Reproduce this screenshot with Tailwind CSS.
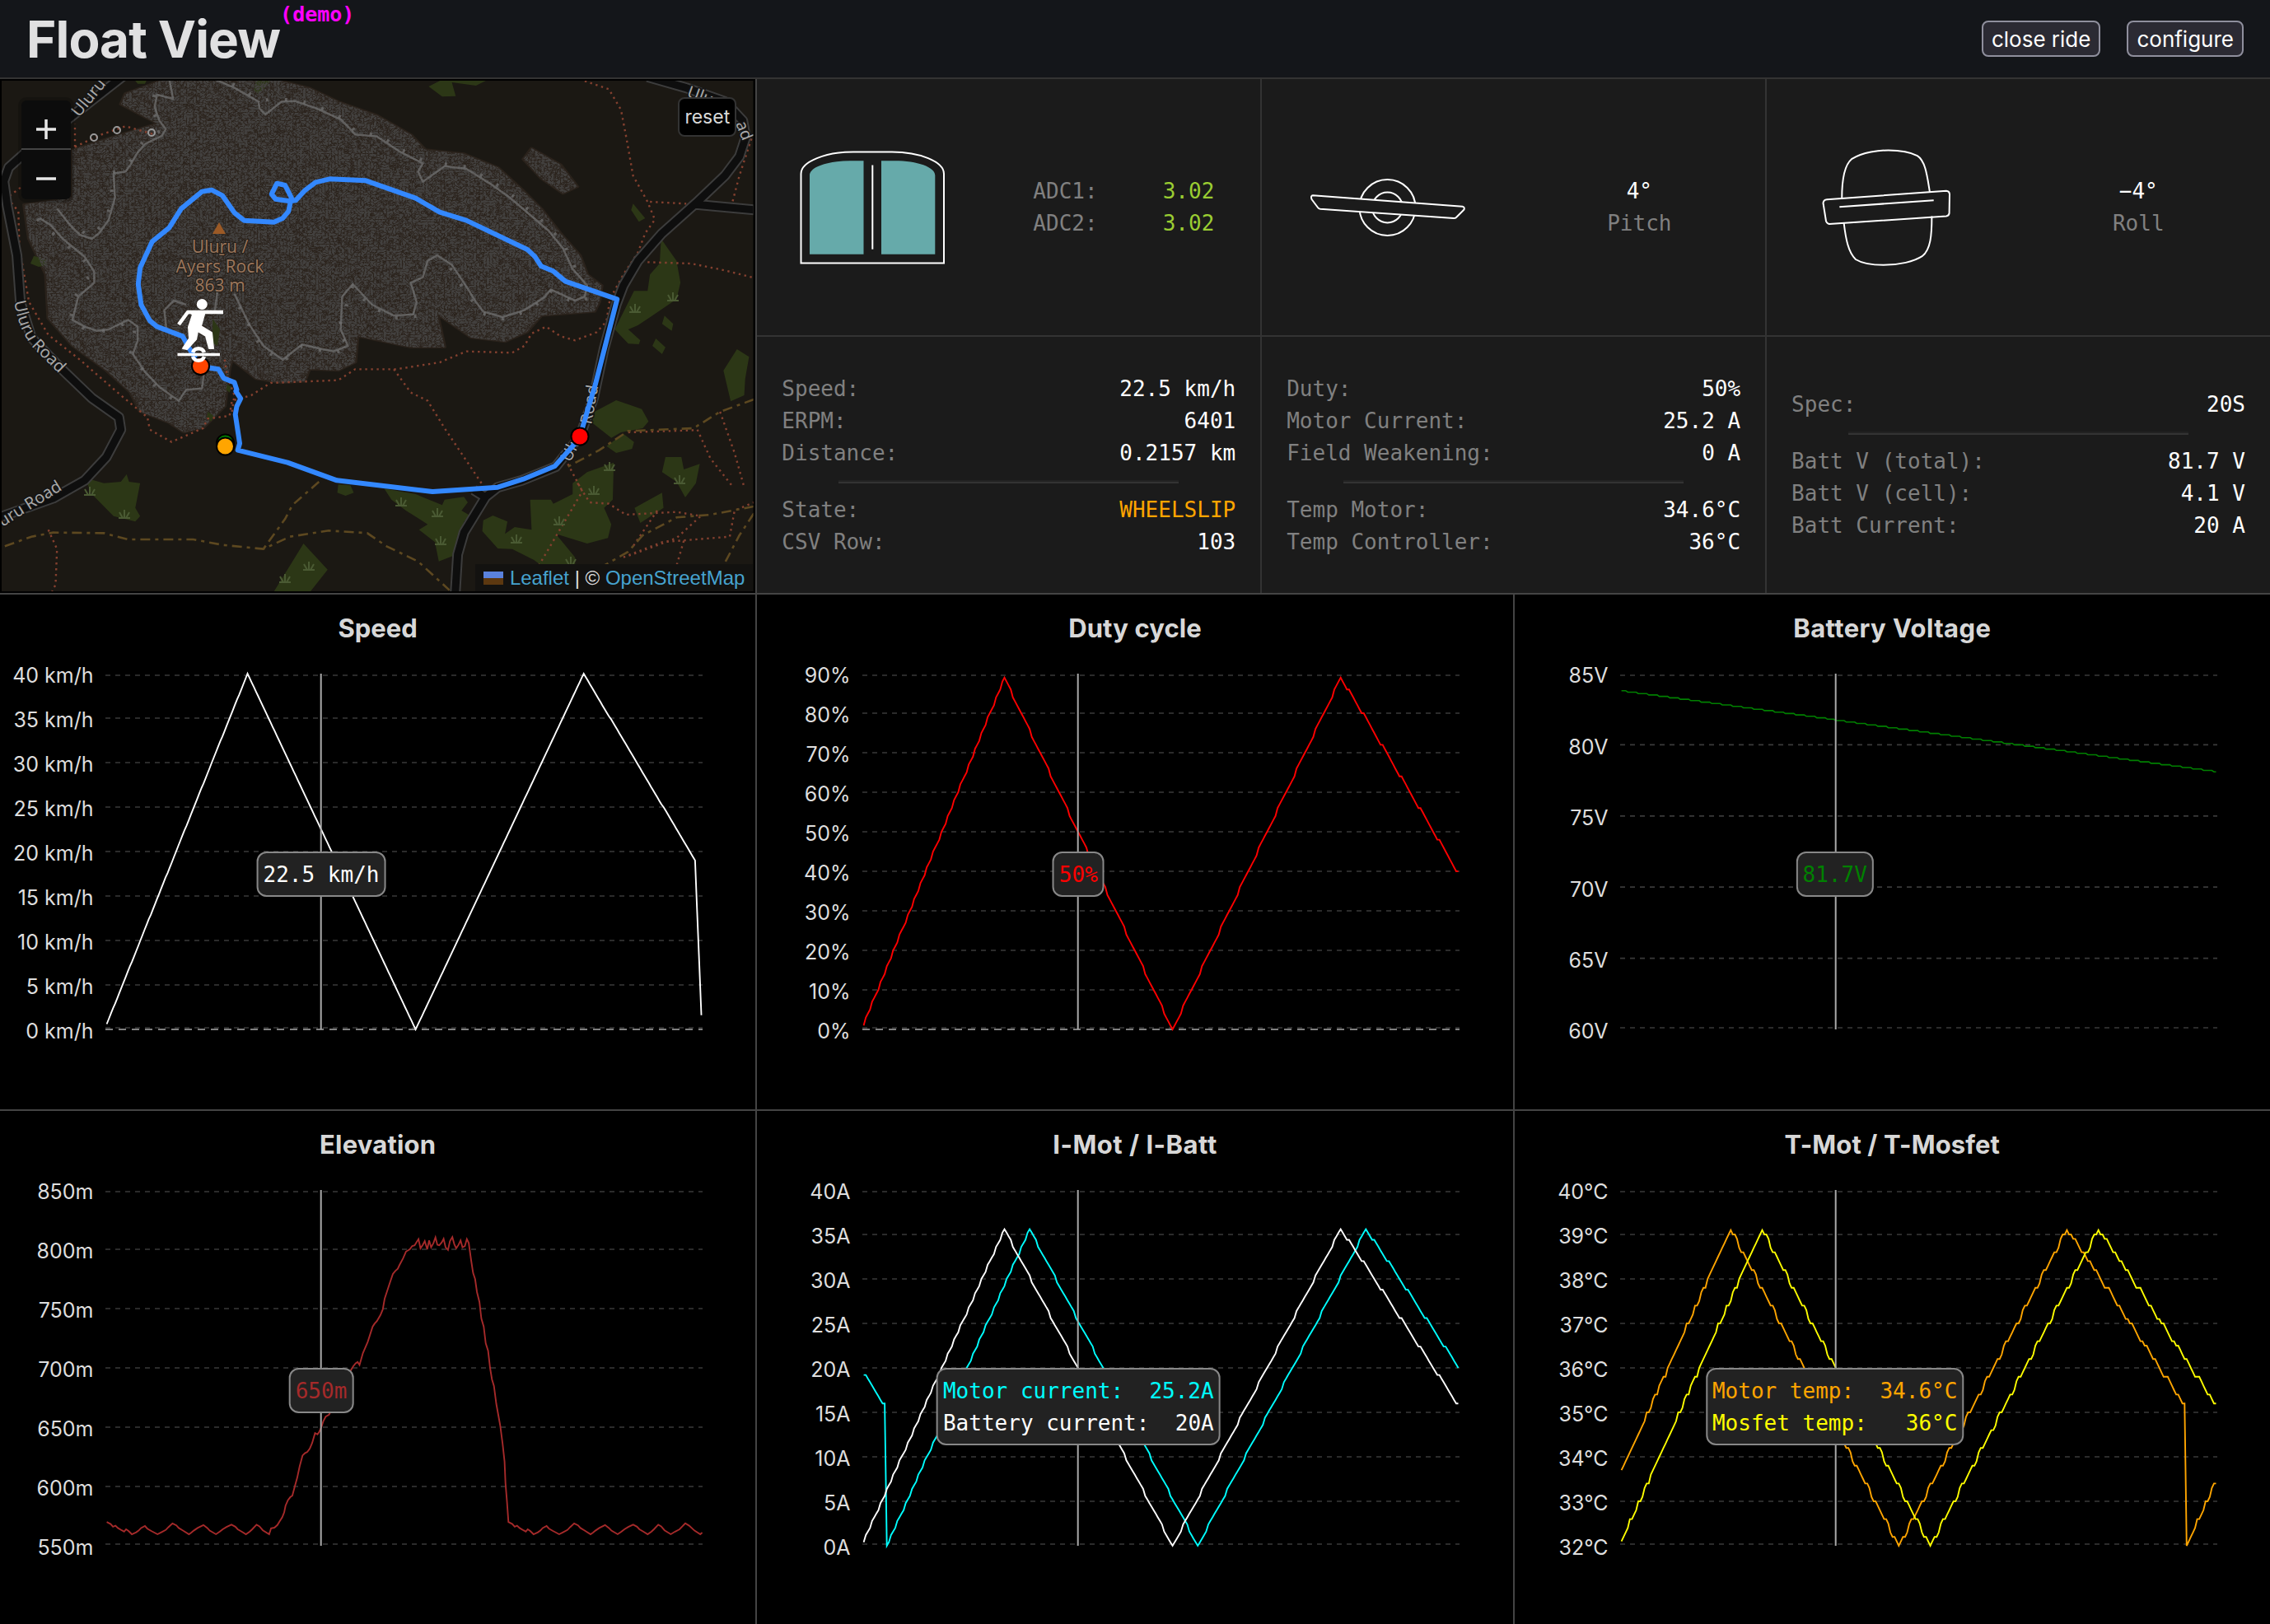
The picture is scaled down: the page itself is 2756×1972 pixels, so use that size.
<!DOCTYPE html>
<html lang="en">
<head>
<meta charset="utf-8">
<title>Float View</title>
<script src="https://cdn.jsdelivr.net/npm/@tailwindcss/browser@4"></script>
</head>
<body class="bg-black text-white/87 font-['Inter',sans-serif] text-[26px] leading-[39px]">
<div class="flex h-[1972px] w-[2756px] flex-col overflow-hidden">

  <header class="flex h-24 shrink-0 items-center justify-between border-b-2 border-[#333] bg-[#14161a] px-8">
    <div class="flex items-start">
      <h1 class="pt-[2px] text-[62px] leading-[94px] font-bold tracking-[-0.9px]">Float View</h1>
      <span class="pt-px font-['DejaVu_Sans_Mono',monospace] text-[25px] leading-9 font-bold text-[#ff00ff]">(demo)</span>
    </div>
    <div class="flex gap-8 text-white">
      <button class="h-11 rounded-lg border-2 border-[#8f8f9d] bg-[#2b2a33] px-2.5 pt-px text-[26px] leading-10">close ride</button>
      <button class="h-11 rounded-lg border-2 border-[#8f8f9d] bg-[#2b2a33] px-2.5 pt-px text-[26px] leading-10">configure</button>
    </div>
  </header>

  <main class="grid flex-1 grid-cols-3 grid-rows-[624px_625px_623px] gap-[2px] bg-[#444]">

    <!-- map -->
    <section class="relative bg-black">
      <svg class="block h-[624px] w-full" viewBox="0 96 917.33 624" preserveAspectRatio="none" id="map">
        <defs>
          <clipPath id="view"><rect x="2" y="98" width="912.5" height="620"/></clipPath>
          <filter id="rockgrain" x="0" y="0" width="100%" height="100%" color-interpolation-filters="sRGB">
            <feTurbulence type="turbulence" baseFrequency="0.15 0.1" numOctaves="2" seed="4"/>
            <feColorMatrix values="0 0 0 0 .26  0 0 0 0 .25  0 0 0 0 .245  3.6 0 0 0 -.2"/>
            <feComposite in2="SourceGraphic" operator="in"/>
          </filter>
          <path id="rock" d="M345 285L560 285L640 320L700 370L780 420L850 490L880 545L960 560L1030 610L1080 690L1120 760L1160 850L1200 930L1215 1000L1245 1040L1240 1100L1230 1135L1120 1150L1090 1210L1045 1245L975 1230L905 1145L920 1265L850 1265L740 1225L735 1320L700 1350L640 1345L630 1390L580 1395L530 1380L480 1310L475 1340L465 1480L420 1560L380 1575L350 1540L290 1500L270 1430L220 1350L150 1260L100 1160L95 1000L60 870L50 745L150 720L150 545L230 500L325 450L250 380L260 340ZM1100 540L1160 600L1195 680L1165 705L1120 650L1083 580Z"/>
          <g id="grass" fill="none" stroke="#4a5a33" stroke-width="2"><path d="M-7 0H7M0 0V-10M-2 0L-6 -7M2 0L6 -7"/></g>
          <path id="lbl-west" d="M17 366Q24 406 43 425L80 462"/>
        </defs>
        <g clip-path="url(#view)">
          <rect x="0" y="96" width="918" height="624" fill="#1b1813"/>
          <g transform="scale(.58673 .33333)">
            <use href="#rock" fill="#2a221b" stroke="#2a221b" stroke-width="8" stroke-linejoin="round"/>
            <g fill="#2c3716">
              <path d="M278 290H304L300 305H285ZM530 290H562L548 320L535 342L525 330ZM915 290H1010L985 312L935 300L943 350L915 352L887 315Z"/>
              <path d="M70 932L95 945L97 965L80 972L63 960ZM1310 742L1335 795L1322 808L1306 765ZM1368 870L1400 950L1408 1030L1400 1090L1350 1150L1320 1185L1300 1200L1325 1240L1322 1254L1300 1252L1272 1200L1312 1060L1340 1060L1345 1000L1365 960ZM1375 1150L1393 1180L1390 1205L1370 1180ZM1357 1233L1377 1265L1370 1290L1350 1260Z"/>
              <path d="M1525 1272L1550 1300L1542 1380L1540 1440L1512 1462L1497 1350ZM1275 1458L1328 1490L1342 1535L1330 1560L1285 1575L1265 1595L1225 1540L1230 1500ZM1290 1580L1312 1610L1308 1635L1275 1650L1255 1625ZM1377 1665H1410L1415 1710L1448 1690L1440 1760L1418 1812L1400 1755L1370 1720ZM1270 1685L1268 1820L1250 1850L1265 1910L1258 1960L1215 1980L1150 1945L1190 2030V2080L1150 2100L1105 2040L1060 2000L1030 1998L998 1935L1000 1895L1020 1878L1050 1900L1045 1945L1065 1920L1100 1930L1097 1820L1140 1820L1145 1835L1185 1800V1760L1215 1720ZM1370 1795L1373 1850L1325 1905L1313 1850Z"/>
              <path d="M795 1780L860 1800L915 1840L920 1820L960 1810L968 1830L955 1860L975 1880L960 1900L945 2020L908 2045L900 1975L867 1930L885 1910L840 1860L810 1820ZM700 1765L725 1768L732 1795L715 1806L698 1795ZM175 1740L215 1760L250 1755L262 1728L267 1755L290 1760L280 1850L290 1880L280 1900L235 1880L190 1800ZM628 1980L678 2075L640 2160H565L600 2060Z"/>
            </g>
            <use href="#rock" fill="#fff" filter="url(#rockgrain)"/>
            <path fill="#2c3716" d="M440 1160L455 1200L450 1260L440 1250ZM470 1400L480 1410L475 1430L468 1420ZM430 1500L442 1515L437 1535L428 1525Z"/>
            <g fill="none" stroke="#707070" stroke-opacity=".75" stroke-linejoin="round">
              <g stroke-width="2.5">
                <path vector-effect="non-scaling-stroke" d="M440 285L485 320L535 370L537 395L549 417L583 370L610 368L655 395L705 435L722 465L735 490L780 497L825 550L875 595L865 625L875 662L920 605L965 615L1015 670L1055 720L1095 780L1135 840L1165 905L1185 980L1215 1040L1210 1080L1190 1095L1140 1055L1125 1085L1085 1130L1040 1155L1000 1135L985 1100L960 1030L935 965L905 930L885 950L875 1010L850 1030L862 1100L855 1145L815 1150L770 1110L730 1035L708 1080L705 1200L720 1260L690 1280L650 1265L625 1255L585 1310L545 1260L515 1180L485 1070"/>
                <path vector-effect="non-scaling-stroke" d="M350 285L358 360L325 345L320 390L330 440L343 470L335 495L300 525L285 555L270 600L260 625L235 632L238 720L225 800L205 850L190 870L165 855L145 820L118 760M82 795L105 820L130 870L175 935L195 990L195 1030L162 1080L150 1165L175 1190L200 1205L225 1200L265 1165L285 1190V1240L275 1290L300 1355L330 1410L370 1460L385 1420L418 1415L422 1360M345 1210L340 1130L360 1095L385 1110M450 1060L445 1130"/>
              </g>
              <path stroke-width="4" stroke-dasharray="3 20" vector-effect="non-scaling-stroke" d="M445 278L490 314L538 364L583 364L610 361L657 388L710 430L738 483L782 490L830 545L879 588M920 598L968 608L1019 663L1060 712L1100 773L1140 833L1170 900L1190 975M1215 1087L1190 1102L1140 1062L1125 1092L1085 1137L1040 1162L995 1140L953 1035L930 972L905 937M862 1152L815 1158L765 1115L730 1042L700 1200L720 1267L690 1287L625 1262L585 1318L540 1265L480 1070"/>
              <path stroke-width="4" stroke-dasharray="3 22" vector-effect="non-scaling-stroke" d="M320 345L314 390L325 440L337 470L295 518L265 600L230 632L232 720L220 800L190 863L140 815M77 798L125 875L170 940L190 990L156 1080L145 1165L175 1198L225 1207L265 1172L280 1190L270 1290L325 1415L370 1468"/>
            </g>
            <g fill="none" stroke="#84402f" stroke-width="2.4" stroke-dasharray="2.4 4.6">
              <path vector-effect="non-scaling-stroke" d="M1210 295L1260 325L1285 400L1297 510L1310 640L1340 735L1355 800L1335 850L1320 920L1290 1000L1262 1090L1255 1170L1235 1210L1190 1240L1160 1225L1130 1190L1100 1215L1085 1260L1060 1285L965 1280L910 1320L820 1345L735 1345L700 1385L560 1395L520 1440L480 1460L475 1515L430 1525L420 1560L355 1610L310 1565L305 1520L250 1440L165 1310L100 1220L60 1100L40 900L38 770L15 720L45 680"/>
              <path vector-effect="non-scaling-stroke" d="M155 535L210 490L260 460L320 490M155 535V450M1345 735L1420 742M1555 505L1530 640L1515 740M1340 955L1430 960L1500 985L1560 1012M815 1345L850 1430L885 1460L920 1560L1000 1770M1490 1500L1520 1650L1540 1775M1443 1565L1470 1670L1515 1770M1300 1575L1440 1567M1175 1690L1205 1790L1115 2060M1195 1760L1220 1830L1260 1835L1295 1875L1400 1865L1450 1880L1400 1960L1300 2025M1290 2030L1370 1975L1510 1955L1520 1860L1560 1830M1415 1970L1400 2060M1360 1860L1310 1990M100 1930L118 2000L115 2130L108 2154M465 1310L470 1370L485 1440L480 1500"/>
            </g>
            <g fill="none" stroke="#5d4820" stroke-width="2.6" stroke-dasharray="12 6 4 6">
              <path vector-effect="non-scaling-stroke" d="M10 1990L65 1955L110 1940L215 1942L265 1965L400 1965L460 1985L545 2000L600 1955L680 1933L760 1942L800 1990L865 2045L930 2150M660 1755L605 1840L590 1890L545 2000M1560 1455L1490 1500L1435 1560L1300 1570L1240 1640L1175 1700M1560 1845L1470 1875L1400 1885L1330 1950L1300 2010L1230 2080M1560 1870L1530 1950L1500 2050"/>
            </g>
            <g fill="none" stroke-linejoin="round">
              <g stroke="#3c3c3c" stroke-width="13">
                <path vector-effect="non-scaling-stroke" d="M260 270L180 380L50 560L18 610L8 660L15 750L35 930L42 1100L65 1230L125 1340L190 1450L246 1520L250 1565L220 1665L175 1750L110 1815L-10 1890M1340 280L1420 320L1500 370L1537 440L1543 500L1530 570L1500 640L1440 740L1370 850L1320 950L1290 1040L1275 1110L1250 1270L1228 1450L1200 1590L1150 1700L1080 1750L1030 1775L1005 1810L960 1940L947 2020L942 2160M980 1785L1005 1812M1440 745L1565 765"/>
              </g>
              <g stroke="#0e0e0e" stroke-width="9">
                <path vector-effect="non-scaling-stroke" d="M260 270L180 380L50 560L18 610L8 660L15 750L35 930L42 1100L65 1230L125 1340L190 1450L246 1520L250 1565L220 1665L175 1750L110 1815L-10 1890M1340 280L1420 320L1500 370L1537 440L1543 500L1530 570L1500 640L1440 740L1370 850L1320 950L1290 1040L1275 1110L1250 1270L1228 1450L1200 1590L1150 1700L1080 1750L1030 1775L1005 1810L960 1940L947 2020L942 2160M980 1785L1005 1812M1440 745L1565 765"/>
              </g>
            </g>
          </g>
          <g>
            <use href="#grass" x="109" y="601"/><use href="#grass" x="151" y="629"/><use href="#grass" x="375" y="692"/><use href="#grass" x="346" y="707"/><use href="#grass" x="487" y="614"/><use href="#grass" x="531" y="627"/><use href="#grass" x="535" y="661"/><use href="#grass" x="627" y="659"/><use href="#grass" x="679" y="637"/><use href="#grass" x="721" y="600"/><use href="#grass" x="740" y="571"/><use href="#grass" x="825" y="587"/><use href="#grass" x="693" y="686"/><use href="#grass" x="817" y="365"/><use href="#grass" x="771" y="379"/>
          </g>
          <g font-family="Noto Sans, sans-serif" font-size="20" fill="#a8a8a8" stroke="#141414" stroke-width="3" paint-order="stroke">
            <text transform="translate(96 143) rotate(-51)">Uluru Ro</text>
            <text><textPath href="#lbl-west">Uluru Road</textPath></text>
            <text transform="translate(3 640) rotate(-32)" font-size="20">uru Road</text>
            <text transform="translate(833 117) rotate(20)">Ulu</text>
            <text transform="translate(893 150) rotate(68)">ad</text>
            <text transform="translate(692 562) rotate(-62)">Ulu</text>
            <text transform="translate(718 516) rotate(-80)">Road</text>
          </g>
          <g fill="none" stroke="#999" stroke-width="2"><circle cx="114" cy="167" r="4"/><circle cx="142" cy="158" r="4"/><circle cx="184" cy="161" r="4"/></g>
          <path d="M266 270L274 284H258Z" fill="#9c5a26"/>
          <g font-family="Noto Sans, sans-serif" font-size="21" fill="#98745a" stroke="#231e19" stroke-width="2" paint-order="stroke" text-anchor="middle">
            <text x="267" y="307">Uluṟu /</text><text x="267" y="331">Ayers Rock</text><text x="267" y="354">863 m</text>
          </g>
          <g transform="scale(.58673 .33333)">
            <path vector-effect="non-scaling-stroke" fill="none" stroke="#3388ff" stroke-width="6" stroke-linejoin="round" stroke-linecap="round" d="M415 1335L452 1345L463 1378L485 1393L490 1420L488 1425L498 1452L490 1480L487 1510L496 1615L492 1640L595 1685L697 1750L895 1791L1030 1775L1083 1745L1148 1698L1198 1600L1232 1400L1277 1090L1170 1025L1145 988L1120 970L1107 935L1092 910L965 803L910 773L860 722L757 658L682 652L653 664L630 695L612 730L600 733L570 725L562 707L573 668L590 675L603 720L597 770L585 795L567 809L505 803L485 775L460 712L438 692L418 698L375 760L350 830L315 880L290 975L286 1035L292 1110L310 1168L325 1190L378 1225L392 1270L415 1335"/>
          </g>
          <g stroke="#000" stroke-width="2">
            <circle cx="273.500" cy="538" r="10.500" fill="green"/>
            <circle cx="273.500" cy="542" r="10.500" fill="orange"/>
            <circle cx="704" cy="530" r="10.500" fill="red"/>
            <circle cx="243.500" cy="444.500" r="10.500" fill="orangered"/>
          </g>
          <g stroke="#fff" fill="none" stroke-linejoin="round">
            <circle cx="245.300" cy="369.500" r="6.500" fill="#fff" stroke="none"/>
            <path stroke-width="4.500" d="M271 379H228L217 394"/>
            <path fill="#fff" stroke-width="2" d="M229 378H249L244 396L257 404L259 423H254L250 408L240 402L238 412L227 424L222 423L230 411L229 397L234 382Z"/>
            <path stroke-width="3.500" d="M215.500 430.500H267"/>
            <path stroke-width="4.500" d="M234 428A7.500 7.500 0 0 1 248 428M234 433A7.500 7.500 0 0 0 248 433"/>
          </g>
        </g>
      </svg>
      <div class="absolute top-[26px] left-[26px] flex w-[60px] flex-col overflow-hidden rounded-md bg-[#0c0c0c] text-white/90 ring-4 ring-black/20">
        <div class="flex h-[60px] items-center justify-center border-b-2 border-[#444] pt-3"><svg width="24" height="24" stroke="currentColor" stroke-width="3.500"><path d="M0 12H24M12 0V24"/></svg></div>
        <div class="flex h-[60px] items-center justify-center pt-2.5"><svg width="24" height="24" stroke="currentColor" stroke-width="3.500"><path d="M0 12H24"/></svg></div>
      </div>
      <div class="absolute top-[22px] right-[23px] flex h-12 w-[71px] items-center justify-center rounded-lg border-2 border-[#333] bg-black text-[23px]">reset</div>
      <div class="absolute right-[3px] bottom-[2px] flex h-[33px] items-center bg-[#131210] pr-2.5 pl-2.5 font-['Liberation_Sans',sans-serif] text-[24px] leading-[33px] whitespace-pre">
        <svg class="mr-2" width="24" height="16"><path fill="#5a82dd" d="M0 0H24V8H0Z"/><path fill="#5c3810" d="M0 8H24V16H0Z"/></svg><span class="text-[#46a3cf]">Leaflet</span><span> | © </span><span class="text-[#46a3cf]">OpenStreetMap</span>
      </div>
    </section>

    <!-- ride details -->
    <section class="col-span-2 grid grid-cols-3 grid-rows-2 gap-[2px] bg-[#333] font-['DejaVu_Sans_Mono',monospace] text-white [&>*]:bg-[#1b1b1b]">
      <div class="flex items-center">
        <div class="-ml-[13px] flex w-[306px] justify-center">
          <svg width="176" height="138" viewBox="971 183 176 138" fill="none" stroke="#fff" stroke-width="2">
            <path d="M972.500 319.500V211C972.500 196 1003 184.500 1036 184.500H1083C1116 184.500 1146 196 1146 211V319.500Z"/>
            <path fill="#66aaaa" stroke="none" d="M983 308.700V213C983 203 1004 195.300 1032 195.300H1048.500V308.700ZM1135.300 308.700V213C1135.300 203 1114 195.300 1086 195.300H1070V308.700Z"/>
            <path d="M1059.300 200.500V302.700"/>
          </svg>
        </div>
        <div class="ml-[42px] w-[220px]">
          <div class="flex justify-between"><span class="text-[#808080]">ADC1:</span><span class="text-[#9acd32]">3.02</span></div>
          <div class="flex justify-between"><span class="text-[#808080]">ADC2:</span><span class="text-[#9acd32]">3.02</span></div>
        </div>
      </div>
      <div class="grid grid-cols-2 items-center justify-items-center">
        <svg width="190" height="74" viewBox="1591 214.500 190 74" fill="none" stroke="#fff" stroke-width="2" stroke-linejoin="round">
          <circle cx="1685.500" cy="251.500" r="34"/><circle cx="1685.500" cy="251.500" r="18.500"/>
          <path fill="#1b1b1b" d="M1595 236.700L1776.500 250.200Q1779.500 251 1778.500 254L1769.500 263Q1768.500 264.800 1766 264.600L1604 253.300Q1602 253 1601 251.500L1593.500 241.500Q1592 237 1595 236.700Z"/>
        </svg>
        <div class="text-center"><div>4°</div><div class="text-[#808080]">Pitch</div></div>
      </div>
      <div class="grid grid-cols-2 items-center justify-items-center">
        <svg class="-ml-[14px]" width="158" height="142" viewBox="2212 180.500 158 142" fill="none" stroke="#fff" stroke-width="2" stroke-linejoin="round">
          <path d="M2236.200 241C2236.200 221 2238 201 2248 192.700C2262 184 2282 182 2292.600 182C2308 182 2320 184.500 2327.800 188.700C2338 195 2340 215 2343 233M2238.600 270C2241 290 2244 306 2253 314.500C2261 319.500 2274 321.300 2286.700 321.300C2306 321.300 2324 317 2333.600 310.700C2344 303 2345.400 285 2345.400 262"/>
          <path d="M2218 241.700L2363 231.300Q2366.600 231.500 2367 235L2366.600 258.500Q2366 261.500 2363 261.900L2221 271.600Q2218 271 2217 268L2213.500 246Q2214 242 2218 241.700ZM2233.300 250.700L2347.700 242.700"/>
        </svg>
        <div class="-ml-[14px] text-center"><div>−4°</div><div class="text-[#808080]">Roll</div></div>
      </div>

      <div class="flex flex-col justify-center px-[30px] pt-px">
        <div class="flex justify-between"><span class="text-[#808080]">Speed:</span><span>22.5 km/h</span></div>
        <div class="flex justify-between"><span class="text-[#808080]">ERPM:</span><span>6401</span></div>
        <div class="flex justify-between"><span class="text-[#808080]">Distance:</span><span>0.2157 km</span></div>
        <hr class="mx-auto my-[13px] w-3/4 border-t-2 border-b-2 border-t-[#222] border-b-[#333]">
        <div class="flex justify-between"><span class="text-[#808080]">State:</span><span class="text-[#ffa500]">WHEELSLIP</span></div>
        <div class="flex justify-between"><span class="text-[#808080]">CSV Row:</span><span>103</span></div>
      </div>
      <div class="flex flex-col justify-center px-[30px] pt-px">
        <div class="flex justify-between"><span class="text-[#808080]">Duty:</span><span>50%</span></div>
        <div class="flex justify-between"><span class="text-[#808080]">Motor Current:</span><span>25.2 A</span></div>
        <div class="flex justify-between"><span class="text-[#808080]">Field Weakening:</span><span>0 A</span></div>
        <hr class="mx-auto my-[13px] w-3/4 border-t-2 border-b-2 border-t-[#222] border-b-[#333]">
        <div class="flex justify-between"><span class="text-[#808080]">Temp Motor:</span><span>34.6°C</span></div>
        <div class="flex justify-between"><span class="text-[#808080]">Temp Controller:</span><span>36°C</span></div>
      </div>
      <div class="flex flex-col justify-center px-[30px]">
        <div class="flex justify-between"><span class="text-[#808080]">Spec:</span><span>20S</span></div>
        <hr class="mx-auto my-[13px] w-3/4 border-t-2 border-b-2 border-t-[#222] border-b-[#333]">
        <div class="flex justify-between"><span class="text-[#808080]">Batt V (total):</span><span>81.7 V</span></div>
        <div class="flex justify-between"><span class="text-[#808080]">Batt V (cell):</span><span>4.1 V</span></div>
        <div class="flex justify-between"><span class="text-[#808080]">Batt Current:</span><span>20 A</span></div>
      </div>
    </section>

    <!-- charts -->
    <section class="relative bg-black"><h2 class="h-24 pt-[21px] text-center text-[31px] font-bold">Speed</h2><svg class="block h-[450px] w-full overflow-visible" data-chart="speed"></svg>
      <div class="absolute top-[312px] left-[390px] -translate-x-1/2 rounded-xl border-2 border-[#888] bg-[#222] px-1.5 pt-[7px] pb-[5px] font-['DejaVu_Sans_Mono',monospace] whitespace-pre text-white">22.5 km/h</div></section>
    <section class="relative bg-black"><h2 class="h-24 pt-[21px] text-center text-[31px] font-bold tracking-[0.1px]">Duty cycle</h2><svg class="block h-[450px] w-full overflow-visible" data-chart="duty"></svg>
      <div class="absolute top-[312px] left-[390px] -translate-x-1/2 rounded-xl border-2 border-[#888] bg-[#222] px-1.5 pt-[7px] pb-[5px] font-['DejaVu_Sans_Mono',monospace] whitespace-pre text-[#ff0000]">50%</div></section>
    <section class="relative bg-black"><h2 class="h-24 pt-[21px] text-center text-[31px] font-bold tracking-[0.4px]">Battery Voltage</h2><svg class="block h-[450px] w-full overflow-visible" data-chart="voltage"></svg>
      <div class="absolute top-[312px] left-[389px] -translate-x-1/2 rounded-xl border-2 border-[#888] bg-[#222] px-1.5 pt-[7px] pb-[5px] font-['DejaVu_Sans_Mono',monospace] whitespace-pre text-[#008000]">81.7V</div></section>
    <section class="relative bg-black"><h2 class="h-24 pt-[21px] text-center text-[31px] font-bold tracking-[0.2px]">Elevation</h2><svg class="block h-[450px] w-full overflow-visible" data-chart="elevation"></svg>
      <div class="absolute top-[312px] left-[390px] -translate-x-1/2 rounded-xl border-2 border-[#888] bg-[#222] px-1.5 pt-[7px] pb-[5px] font-['DejaVu_Sans_Mono',monospace] whitespace-pre text-[#a52a2a]">650m</div></section>
    <section class="relative bg-black"><h2 class="h-24 pt-[21px] text-center text-[31px] font-bold tracking-[0.5px]">I-Mot / I-Batt</h2><svg class="block h-[450px] w-full overflow-visible" data-chart="current"></svg>
      <div class="absolute top-[312px] left-[390px] -translate-x-1/2 rounded-xl border-2 border-[#888] bg-[#222] px-1.5 pt-[7px] pb-[5px] font-['DejaVu_Sans_Mono',monospace] whitespace-pre"><div class="flex justify-between text-[#00ffff]"><span>Motor current:  </span><span>25.2A</span></div><div class="flex justify-between text-white"><span>Battery current:  </span><span>20A</span></div></div></section>
    <section class="relative bg-black"><h2 class="h-24 pt-[21px] text-center text-[31px] font-bold tracking-[0.1px]">T-Mot / T-Mosfet</h2><svg class="block h-[450px] w-full overflow-visible" data-chart="temp"></svg>
      <div class="absolute top-[312px] left-[389px] -translate-x-1/2 rounded-xl border-2 border-[#888] bg-[#222] px-1.5 pt-[7px] pb-[5px] font-['DejaVu_Sans_Mono',monospace] whitespace-pre"><div class="flex justify-between text-[#ffa500]"><span>Motor temp:  </span><span>34.6°C</span></div><div class="flex justify-between text-[#ffff00]"><span>Mosfet temp:  </span><span>36°C</span></div></div></section>
  </main>
</div>

<script>
  const N = 285, X0 = 128, X1 = 853, H = 432, STEP = 2.551;
  const px = i => 129.6 + i * STEP;
  const r1 = v => Math.round(v * 10) / 10;
  const idx = [...Array(N - 1).keys()];

  // duty cycle per sample; the last sample is a full stop
  const duty = [...Array(N).keys()].map(i => {
    if (i === N - 1) return 0;
    if (i <= 67) return Math.round((i + 1) * 89 / 68);
    if (i <= 147) return Math.round((147 - i) * 10 / 9);
    if (i <= 227) return Math.round((i - 147) * 10 / 9);
    const k = i - 227;
    if (k < 4) return 89 - k;
    return Math.ceil((80 - 0.8 * k) * 10 / 9 - 1e-6);
  });
  const at = i => duty[(i + N) % N];
  const speed = i => i <= 67 ? r1((i + 1) * 40 / 68) : i <= 147 ? (147 - i) / 2 : i <= 227 ? (i - 147) / 2
    : i <= 280 ? r1(40 - (i - 227) * 0.396) : 19 - (i - 280) * 5.8;

  // elevation profile: [distance, depth] with 4.347 units per sample and 3.6 units per metre
  const flat = [220,1258,228,1264,233,1272,238,1269,243,1276,251,1283,256,1287,260,1280,265,1285,272,1295,281,1289,286,1284,291,1276,299,1270,304,1278,312,1285,325,1295,333,1289,342,1282,348,1273,356,1262,364,1268,369,1276,377,1283,390,1295,395,1290,400,1284,408,1276,420,1267,428,1276,433,1284,446,1295,454,1287,460,1280,468,1273,478,1266,486,1272,491,1280,499,1287,508,1295,516,1287,521,1280,530,1266,536,1271,543,1283,556,1295];
  const hill = [560,1277,567,1275,573,1267,578,1255,583,1244,587,1229,590,1208,595,1191,600,1182,604,1178,609,1150,614,1124,619,1090,625,1056,630,1049,635,1045,640,1035,645,1018,651,988,656,992,660,983,664,970,668,952,673,938,680,932,690,905,705,850,725,797,730,785,735,776,739,772,743,781,750,745,760,711,770,665,774,656,779,648,786,630,791,613,795,580,805,535,812,505,817,496,822,489,826,477,833,458,839,437,847,430,852,420,857,418,861,408,865,399,869,427,874,416,878,405,883,430,887,403,891,424,896,411,900,394,904,416,908,418,913,409,917,398,921,424,926,432,930,405,935,393,939,414,943,427,948,416,952,403,956,424,961,420,965,399,969,411,974,465,978,502,982,520,986,560,991,590,995,640,1000,665,1004,715,1009,738,1013,790,1017,825,1021,845,1026,900,1034,965,1039,1020,1043,1075,1045,1140,1048,1195];
  const tail = [1396,1287,1405,1280,1411,1271,1417,1262,1425,1269,1436,1284,1448,1295,1452,1290];
  const profile = [...flat, ...hill, ...flat.map((v, n) => n % 2 ? v : v + 831), ...tail];
  const elevation = [];
  for (let n = 0; n < profile.length; n += 2) elevation.push([(profile[n] - 220) / 4.347, 850 - (profile[n + 1] - 250) / 3.6]);

  const series = f => idx.map(i => [i, f(i)]);
  const charts = {
    speed: { min: 0, max: 40, step: 5, unit: ' km/h', zero: true, lines: [['#fff', series(speed)]] },
    duty: { min: 0, max: 90, step: 10, unit: '%', zero: true, lines: [['red', series(at)]] },
    voltage: { min: 60, max: 85, step: 5, unit: 'V', lines: [['green', series(i => r1(83.8 - 0.0201 * i))]] },
    elevation: { min: 550, max: 850, step: 50, unit: 'm', lines: [['brown', elevation]] },
    current: { min: 0, max: 40, step: 5, unit: 'A', lines: [['cyan', series(i => at(i - 12) * 0.4)], ['#fff', series(i => at(i) * 0.4)]] },
    temp: { min: 32, max: 40, step: 1, unit: '°C', lines: [['orange', series(i => r1(32 + at(i + 15) * 0.08))], ['yellow', series(i => r1(32 + at(i) * 0.08))]] },
  };

  for (const svg of document.querySelectorAll('[data-chart]')) {
    const c = charts[svg.dataset.chart];
    const y = v => (c.max - v) / (c.max - c.min) * H;
    let out = '';
    for (let v = c.max; v >= c.min; v -= c.step) {
      const gy = Math.min(Math.max(y(v), 2), H - 2);
      out += `<text x="113.500" y="${y(v) + 11.4}" text-anchor="end" font-size="25" fill="#dedede">${v}${c.unit}</text>`;
      out += `<path d="M${X0} ${gy}H${X1}" stroke="#3a3a3a" stroke-width="1.700" stroke-dasharray="6 6"/>`;
    }
    if (c.zero) out += `<path d="M${X0} ${H}H${X1}" stroke="#aaa" stroke-width="1.500" stroke-dasharray="9 7"/>`;
    for (const [color, pts] of c.lines)
      out += `<polyline fill="none" stroke="${color}" stroke-width="${svg.dataset.chart === 'voltage' ? 1.6 : 1.9}" points="${pts.map(([i, v]) => px(i).toFixed(1) + ',' + y(v).toFixed(1)).join(' ')}"/>`;
    out += `<path d="M389.700 0V${H}" stroke="#aaa" stroke-width="2"/>`;
    svg.innerHTML = out;
  }
</script>
</body>
</html>
